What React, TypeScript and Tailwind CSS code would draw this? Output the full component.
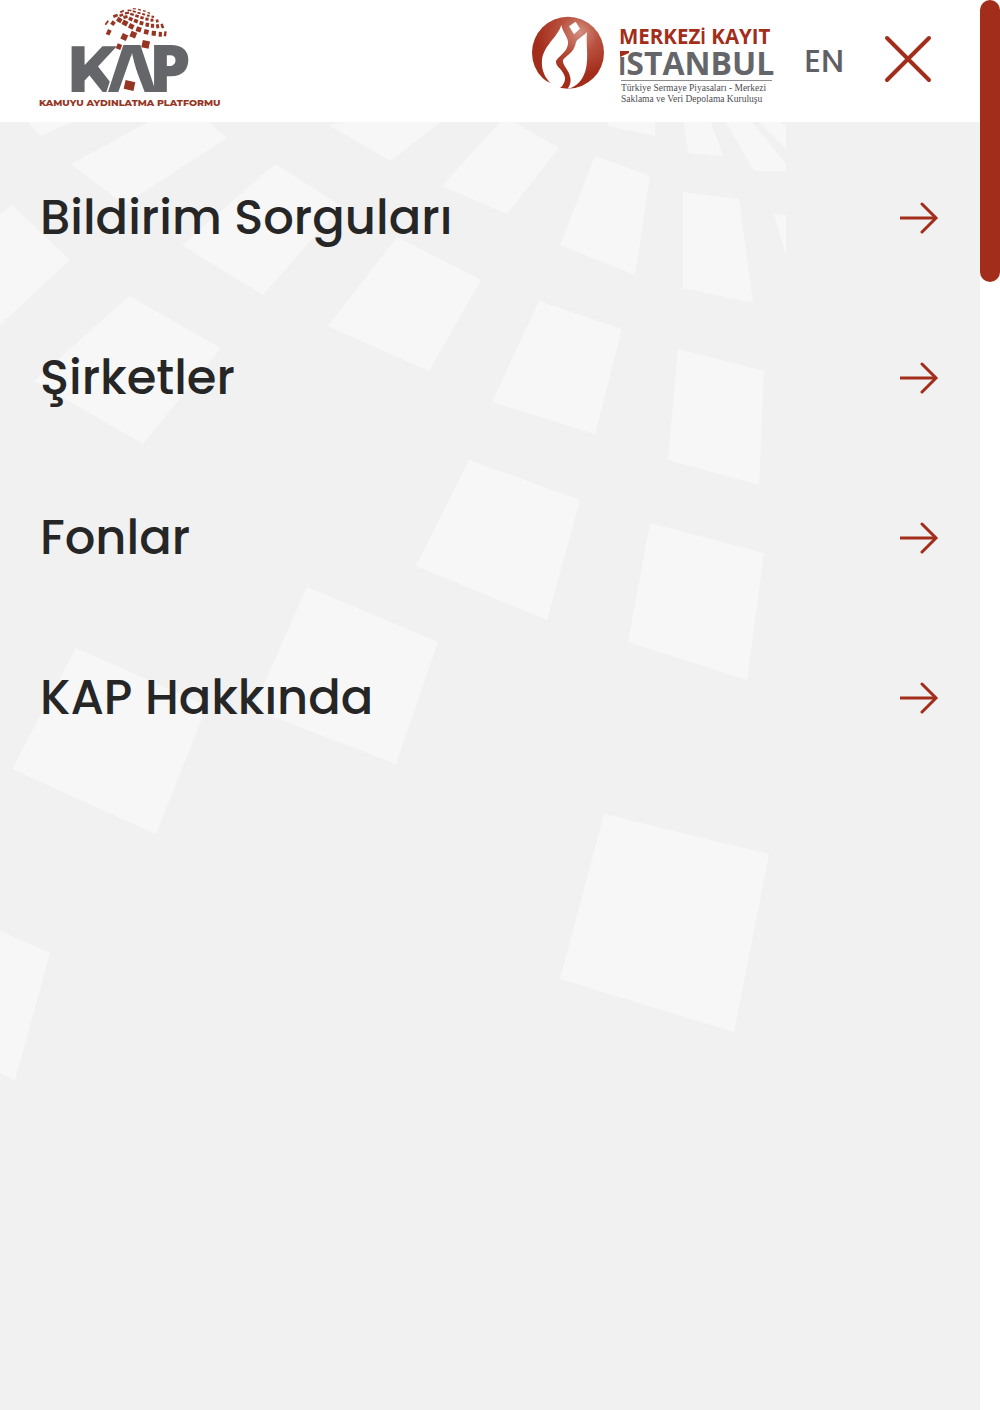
const menuItems = ["Bildirim Sorguları", "Şirketler", "Fonlar", "KAP Hakkında"];

const backdropTiles = [
  "28,0 72,0 40,14",
  "148,0 209,0 227,16 124,83 71,42",
  "328,3 344,0 441,0 391,39",
  "500,0 514,0 559,26 507,92 442,64",
  "0,92 12,83 70,138 0,203",
  "275,42 341,84 263,173 182,123",
  "397,115 481,158 429,249 328,204",
  "129,174 221,226 143,322 34,259",
  "595,34 650,54 635,153 560,123",
  "608,0 655,0 655,14 608,4",
  "684,0 711,0 723,34 688,31",
  "726,0 752,0 786,42 786,49 754,49",
  "759,0 780,0 786,4 786,27",
  "683,70 739,77 753,181 683,166",
  "774,92 786,93 786,134",
  "539,179 622,207 595,312 492,280",
  "678,227 764,249 759,363 668,338",
  "469,338 580,378 547,498 416,444",
  "650,401 764,431 747,558 628,520",
  "604,692 769,732 734,910 560,857",
  "307,465 438,520 396,642 253,587",
  "76,526 207,584 156,712 12,647",
  "0,809 50,831 15,958 0,951",
];

// x, y, width, height, rotation
const globeTiles: number[][] = [
  [145.7, 44.3, 7.4, 7.4, 12], [129.5, 85.5, 10, 9, 12],
  [119, 46.7, 4.8, 5.4, 22], [124.3, 37, 6, 6, 25], [133.3, 34.7, 6, 6, 22],
  [108.7, 32.3, 4, 5.4, 25], [125, 23, 5.4, 5, 28], [131.3, 26.4, 5, 5, 25],
  [138.7, 29.4, 5, 5, 18], [146.3, 31.9, 4.6, 5, 12], [153.8, 33.3, 4.2, 5, 5],
  [160.3, 34.3, 3.2, 4.8, 2], [165.2, 33.8, 2.4, 5, 8],
  [119.3, 20, 5, 4.4, 30], [113, 23.2, 4, 4.2, 35], [106.8, 22.8, 1.8, 5, 35],
  [125.5, 17, 4.2, 3, -15], [130.7, 19, 4, 3.6, 25], [135.9, 21, 4, 3.8, 20],
  [141.5, 23.2, 3.8, 3.9, 15], [147.3, 24.8, 3.5, 4, 8], [152.5, 25.8, 3.2, 4, 0],
  [157.6, 26.2, 2.9, 4, -8], [162.3, 26, 2.6, 4.6, -18],
  [115.5, 15.8, 4.6, 2.8, -20], [121.3, 15.2, 3.8, 2.6, -20], [127, 13, 4.2, 2.2, -10],
  [132, 14.3, 3.8, 2.4, 15], [137, 16.1, 3.6, 2.7, 18], [142, 17.8, 3.4, 2.9, 12],
  [147, 19.2, 3.2, 3, 5], [152, 20.2, 2.9, 3, -5], [157.2, 20.9, 2.7, 3, -12],
  [122, 11.5, 4, 1.8, -25], [129.5, 10.4, 3.8, 1.6, 5], [134.3, 11.6, 3.4, 1.7, 15],
  [139, 13, 3.2, 1.8, 15], [143.7, 14.3, 3, 2, 12], [148.3, 15.6, 2.8, 2, 8],
  [152.8, 16.8, 2.6, 2, 10], [134.5, 8.8, 3.2, 1.2, 8], [139.5, 9.7, 3, 1.2, 15],
  [144.3, 11, 2.8, 1.4, 18], [148.8, 12.8, 2.6, 1.4, 22],
];

function KapLogo() {
  return (
    <svg viewBox="40 6 181 102" className="h-[102px] w-[181px] shrink-0 overflow-visible" role="img" aria-label="KAP Kamuyu Aydınlatma Platformu">
      <g className="fill-[#65666a] font-['Open_Sans','Noto_Sans',sans-serif] text-[66px] font-extrabold">
        <text x="67" y="92" className="font-['Montserrat','Open_Sans',sans-serif]">K</text>
        <text x="108" y="92" className="stroke-white stroke-[3px] [paint-order:stroke]">A</text>
        <text x="149" y="92">P</text>
      </g>
      <polygon points="131,56 145,93 118,93" className="fill-white" />
      <g className="fill-[#973525]">
        {globeTiles.map(([x, y, w, h, r], i) => (
          <rect key={i} x={x - w / 2} y={y - h / 2} width={w} height={h} transform={`rotate(${r} ${x} ${y})`} />
        ))}
        <g transform="translate(39 106) scale(0.5)">
          <text className="font-['Montserrat','Open_Sans',sans-serif] text-[19px] font-extrabold">
            KAMUYU AYDINLATMA PLATFORMU
          </text>
        </g>
      </g>
    </svg>
  );
}

function MkkLogo() {
  return (
    <svg viewBox="530 16 242 90" className="h-[90px] w-[242px] shrink-0 overflow-visible" role="img" aria-label="Merkezi Kayıt İstanbul">
      <defs>
        <radialGradient id="sphere" cx="0.66" cy="0.22" r="0.6">
          <stop offset="0" stopColor="#d38f80" />
          <stop offset="0.45" stopColor="#b9513f" />
          <stop offset="1" stopColor="#a32d1b" />
        </radialGradient>
      </defs>
      <g transform="translate(525 10) scale(0.3333)">
        <circle cx="129" cy="128" r="108" fill="url(#sphere)" />
        <g className="fill-white">
          <path d="M109 45 C98 82 56 106 51 150 C48 182 62 206 77 219 C72 217 66 214 60 211 L84 244 L108 232 C122 216 124 204 114 188 C106 174 92 168 93 153 C98 140 126 128 129 102 C132 84 112 66 109 45 Z" />
          <path d="M186 66 C182 100 192 140 182 180 C174 210 154 232 128 236 C140 220 138 206 132 190 C126 174 112 164 114 150 C124 136 148 128 153 96 C160 84 176 78 186 66 Z" />
          <path d="M152 35 L165 56 L147 73 L132 49 Z" />
        </g>
      </g>
      <g transform="translate(619 44) scale(0.5)">
        <text className="fill-[#a32d1b] font-['Open_Sans','Noto_Sans',sans-serif] text-[41px] font-bold">
          MERKEZ<tspan className="text-[34px]">İ</tspan> KAYIT
        </text>
      </g>
      <text x="618" y="75" className="fill-[#65666a] font-['Open_Sans','Noto_Sans',sans-serif] text-[32px] font-bold">
        <tspan className="text-[25px]">İ</tspan>STANBUL
      </text>
      <polygon points="620,51 629,51 629,53 620,57" className="fill-[#a32d1b]" />
      <rect x="621" y="80" width="151" height="1" className="fill-[#8c8c8e]" />
      <g transform="translate(621 91) scale(0.5)" className="fill-[#4c4c4f] font-['Liberation_Serif',serif] text-[19px]">
        <text>Türkiye Sermaye Piyasaları - Merkezi</text>
        <text y="22">Saklama ve Veri Depolama Kuruluşu</text>
      </g>
    </svg>
  );
}

function ArrowIcon() {
  return (
    <svg viewBox="0 0 42 32" className="h-8 w-[42px] shrink-0 fill-none stroke-[#a32d1b] stroke-3" aria-hidden="true">
      <path d="M2 16H38" />
      <path d="M24 2 38 16 24 30" strokeLinecap="round" />
    </svg>
  );
}

export default function App() {
  return (
    <div className="flex min-h-screen bg-white font-['Poppins','Montserrat',sans-serif]">
      <div className="flex min-w-0 flex-1 flex-col">
        <header className="flex h-[122px] items-center justify-between bg-white pr-12 pl-10">
          <a href="#" className="mb-2 shrink-0">
            <KapLogo />
          </a>
          <div className="flex items-center">
            <a href="#" className="mr-8 shrink-0">
              <MkkLogo />
            </a>
            <a href="#" className="mr-10 text-[32px] leading-10 font-medium text-[#5f6066]">EN</a>
            <button type="button" aria-label="Kapat" className="mb-1 shrink-0">
              <svg viewBox="0 0 48 48" className="size-12 fill-none stroke-[#a32d1b] stroke-4" strokeLinecap="round" aria-hidden="true">
                <path d="M3 3 45 45M45 3 3 45" />
              </svg>
            </button>
          </div>
        </header>
        <main className="relative flex-1 overflow-hidden bg-[#f1f1f1]">
          <svg viewBox="0 0 786 960" className="absolute top-0 left-0 h-[960px] w-[786px] fill-[#f7f7f7]" aria-hidden="true">
            {backdropTiles.map((points) => (
              <polygon key={points} points={points} />
            ))}
          </svg>
          <nav className="relative pt-4">
            <ul>
              {menuItems.map((label) => (
                <li key={label}>
                  <button type="button" className="flex h-40 w-full items-center justify-between px-10 text-left text-5xl font-medium text-[#262626]">
                    {label}
                    <ArrowIcon />
                  </button>
                </li>
              ))}
            </ul>
          </nav>
        </main>
      </div>
      <div className="w-5 shrink-0 bg-white">
        <div className="h-[20vh] rounded-full bg-[#a32d1b]" />
      </div>
    </div>
  );
}
